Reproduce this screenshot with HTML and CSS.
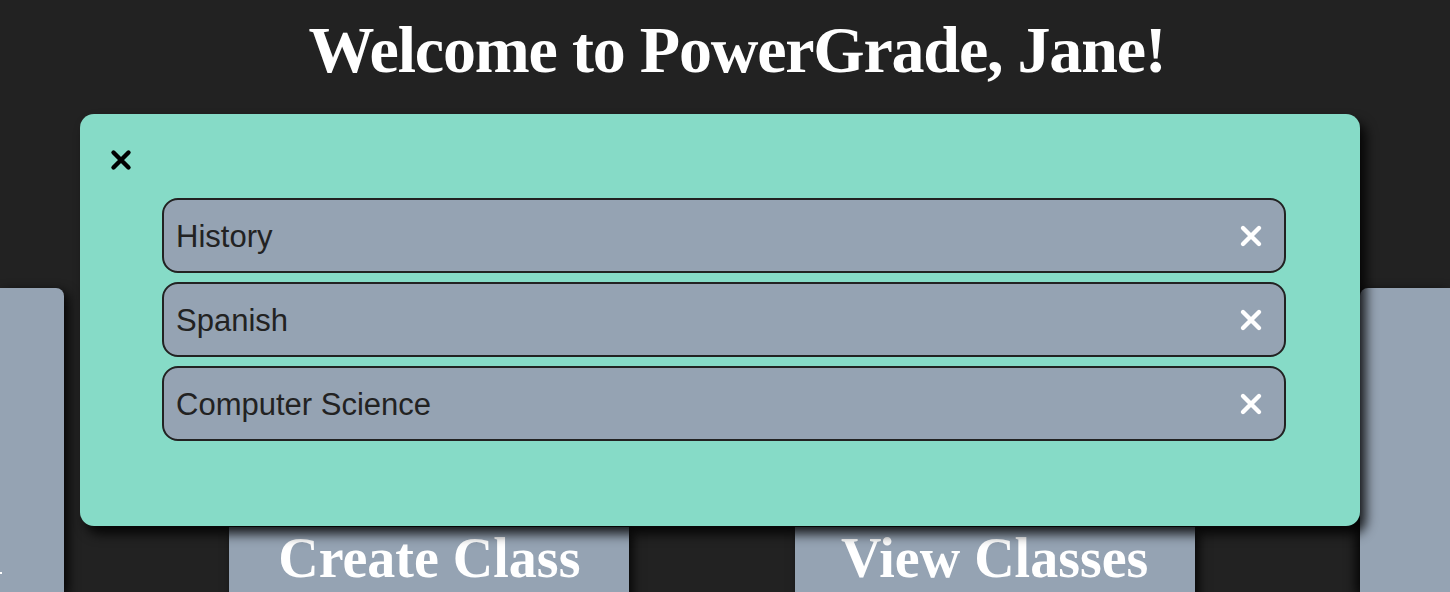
FILE: index.html
```html
<!DOCTYPE html>
<html>
<head>
<meta charset="utf-8">
<link rel="stylesheet" href="styles.css">
</head>
<body>
<h1 class="title">Welcome to PowerGrade, Jane!</h1>
<div class="dash">
  <div class="card card-left"><span class="card-dot"></span></div>
  <div class="actions">
    <div class="action-btn">Create Class</div>
    <div class="action-btn">View Classes</div>
  </div>
  <div class="card card-right"></div>
</div>
<div class="modal">
  <div class="modal-close">
    <svg width="24" height="24" viewBox="0 0 24 24"><path d="M4.5 4.5 L19.5 19.5 M19.5 4.5 L4.5 19.5" stroke="#000" stroke-width="4.4" stroke-linecap="round"/></svg>
  </div>
  <ul class="class-list">
    <li class="class-item"><span>History</span><svg class="item-x" width="26" height="26" viewBox="0 0 26 26"><path d="M5 5 L21 21 M21 5 L5 21" stroke="#fff" stroke-width="4.4" stroke-linecap="round"/></svg></li>
    <li class="class-item"><span>Spanish</span><svg class="item-x" width="26" height="26" viewBox="0 0 26 26"><path d="M5 5 L21 21 M21 5 L5 21" stroke="#fff" stroke-width="4.4" stroke-linecap="round"/></svg></li>
    <li class="class-item"><span>Computer Science</span><svg class="item-x" width="26" height="26" viewBox="0 0 26 26"><path d="M5 5 L21 21 M21 5 L5 21" stroke="#fff" stroke-width="4.4" stroke-linecap="round"/></svg></li>
  </ul>
</div>
</body>
</html>
```
FILE: styles.css
```css
html, body {
  margin: 0;
  padding: 0;
  background: #222222;
  height: 592px;
  overflow: hidden;
}
body {
  position: relative;
  font-family: "Liberation Serif", "Times New Roman", serif;
}
.title {
  margin: 0;
  padding-top: 12px;
  text-align: center;
  color: #fff;
  font-size: 66px;
  font-weight: bold;
  line-height: 76px;
  letter-spacing: -1.2px;
  padding-left: 24px;
}
.dash {
  display: flex;
  margin-top: 200px;
  height: 304px;
}
.card {
  background: #95a3b3;
  box-shadow: 4px 4px 12px rgba(0,0,0,0.9);
  position: relative;
}
.card-left {
  width: 64px;
  border-top-right-radius: 8px;
}
.card-dot {
  position: absolute;
  left: 0;
  top: 284px;
  width: 2px;
  height: 2px;
  background: #fff;
}
.card-right {
  flex: 1;
  border-top-left-radius: 8px;
  box-shadow: -4px 4px 12px rgba(0,0,0,0.9);
}
.actions {
  width: 1296px;
  display: flex;
  justify-content: space-evenly;
  padding-top: 239px;
  box-sizing: border-box;
}
.action-btn {
  width: 400px;
  height: 80px;
  background: #95a3b3;
  color: #fff;
  font-weight: bold;
  font-size: 56px;
  text-align: center;
  line-height: 62px;
  box-shadow: 4px 4px 10px rgba(0,0,0,0.8);
}
.modal {
  position: absolute;
  left: 80px;
  top: 114px;
  width: 1280px;
  height: 412px;
  box-sizing: border-box;
  background: #86dbc7;
  border-radius: 14px;
  box-shadow: 6px 8px 12px rgba(0,0,0,0.85);
  padding: 34px 74px 0 82px;
}
.modal-close {
  position: absolute;
  left: 29px;
  top: 34px;
  width: 24px;
  height: 24px;
}
.class-list {
  list-style: none;
  margin: 0;
  padding: 50px 0 0 0;
  display: flex;
  flex-direction: column;
  gap: 9px;
}
.class-item {
  display: flex;
  align-items: center;
  justify-content: space-between;
  height: 75px;
  box-sizing: border-box;
  border: 2px solid #222;
  border-radius: 16px;
  background: #95a3b3;
  padding: 2px 20px 0 12px;
  font-family: "Liberation Sans", Arial, sans-serif;
  font-size: 31px;
  color: #222;
}
.item-x {
  display: block;
  margin-top: -2px;
}
```
